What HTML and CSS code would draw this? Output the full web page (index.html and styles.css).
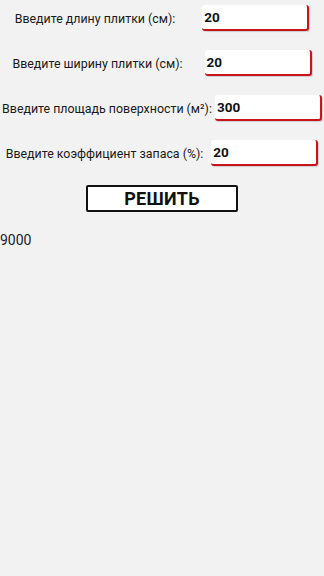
FILE: index.html
```html
<!DOCTYPE html>
<html lang="ru">
<head>
<meta charset="utf-8">
<title>Плитка</title>
<link rel="stylesheet" href="styles.css">
</head>
<body>
<div class="form">
  <div class="row row-1">
    <span class="label">Введите длину плитки (см):</span>
    <div class="field">20</div>
  </div>
  <div class="row row-2">
    <span class="label">Введите ширину плитки (см):</span>
    <div class="field">20</div>
  </div>
  <div class="row row-3">
    <span class="label">Введите площадь поверхности (м²):</span>
    <div class="field">300</div>
  </div>
  <div class="row row-4">
    <span class="label">Введите коэффициент запаса (%):</span>
    <div class="field">20</div>
  </div>
  <div class="actions">
    <button class="solve">РЕШИТЬ</button>
  </div>
  <div class="result">9000</div>
</div>
</body>
</html>
```
FILE: styles.css
```css
html, body {
  margin: 0;
  padding: 0;
  background: #f2f2f2;
}
body {
  width: 324px;
  height: 576px;
  font-family: Roboto, "Noto Sans", sans-serif;
  color: #1a1a1a;
}
.form {
  display: flex;
  flex-direction: column;
  padding-top: 5px;
}
.row {
  display: flex;
  align-items: center;
  justify-content: center;
  height: 26px;
  margin-bottom: 19px;
}
.label {
  font-size: 12.4px;
  white-space: nowrap;
}
.row-1 .field { margin-left: 27px; }
.row-2 .field { margin-left: 22px; }
.row-3 .field { margin-left: 3px; }
.row-4 .field { margin-left: 8px; }
.field {
  box-sizing: border-box;
  width: 107px;
  height: 26px;
  background: #fff;
  border-right: 2px solid #c8141c;
  border-bottom: 2px solid #c8141c;
  border-radius: 3px;
  box-shadow: 1px 1px 1px rgba(0,0,0,0.15);
  font-size: 13.5px;
  font-weight: bold;
  color: #111;
  display: flex;
  align-items: center;
  padding-left: 2px;
}
.actions {
  display: flex;
  justify-content: center;
}
.solve {
  box-sizing: border-box;
  width: 152px;
  height: 27px;
  margin: 0;
  padding: 0;
  background: #fff;
  border: 2px solid #111;
  border-radius: 2px;
  font-family: Roboto, "Noto Sans", sans-serif;
  font-size: 18px;
  font-weight: bold;
  color: #111;
  letter-spacing: 0.3px;
}
.result {
  margin-top: 20px;
  font-size: 14px;
  color: #222;
}
```
